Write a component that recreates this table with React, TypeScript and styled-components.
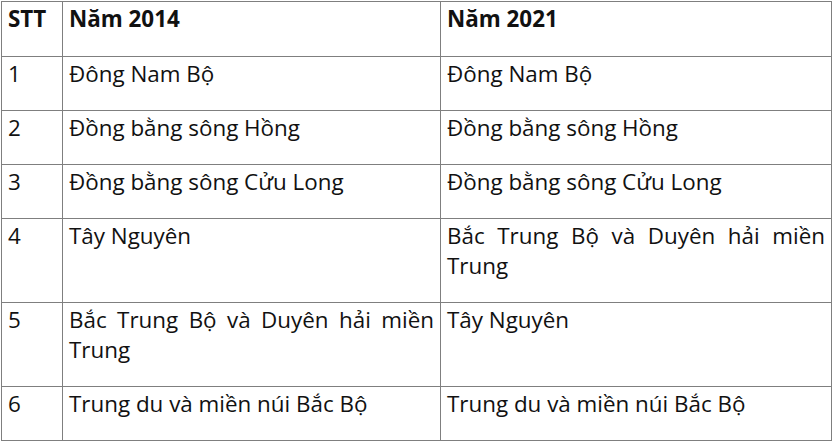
import React from 'react'
import styled, {createGlobalStyle} from 'styled-components'

const GlobalStyle = createGlobalStyle`
  body {
    margin: 0;
    background-color: #fff;
    color: #1a1a1a;
    font-family: 'Open Sans', 'Noto Sans', sans-serif;
  }
`

const Table = styled.table`
  margin: 1px 0 0 1px;
  width: 830px;
  border-collapse: collapse;
  table-layout: fixed;
`

const Col = styled.col<{$width: number}>`
  width: ${p => p.$width}px;
`

const Cell = styled.td<{$head?: boolean}>`
  border: 1px solid #7f7f7f;
  padding: ${p => (p.$head ? '2px 6px 22px 6px' : '2px 6px 21px 6px')};
  vertical-align: top;
  font-size: 22.4px;
  line-height: 30px;
  font-weight: ${p => (p.$head ? 700 : 400)};
  text-align: justify;
  color: #111;
`

const rows = [
    ['1', 'Đông Nam Bộ', 'Đông Nam Bộ'],
    ['2', 'Đồng bằng sông Hồng', 'Đồng bằng sông Hồng'],
    ['3', 'Đồng bằng sông Cửu Long', 'Đồng bằng sông Cửu Long'],
    ['4', 'Tây Nguyên', 'Bắc Trung Bộ và Duyên hải miền Trung'],
    ['5', 'Bắc Trung Bộ và Duyên hải miền Trung', 'Tây Nguyên'],
    ['6', 'Trung du và miền núi Bắc Bộ', 'Trung du và miền núi Bắc Bộ']
]

const App = () => {
    return (
        <React.Fragment>
            <GlobalStyle/>
            <Table>
                <colgroup>
                    <Col $width={61}/>
                    <Col $width={378}/>
                    <Col $width={391}/>
                </colgroup>
                <thead>
                    <tr>
                        <Cell as="th" $head>STT</Cell>
                        <Cell as="th" $head>Năm 2014</Cell>
                        <Cell as="th" $head>Năm 2021</Cell>
                    </tr>
                </thead>
                <tbody>
                    {rows.map(row => (
                        <tr key={row[0]}>
                            {row.map((text, i) => (
                                <Cell key={i}>{text}</Cell>
                            ))}
                        </tr>
                    ))}
                </tbody>
            </Table>
        </React.Fragment>
    )
}

export default App
